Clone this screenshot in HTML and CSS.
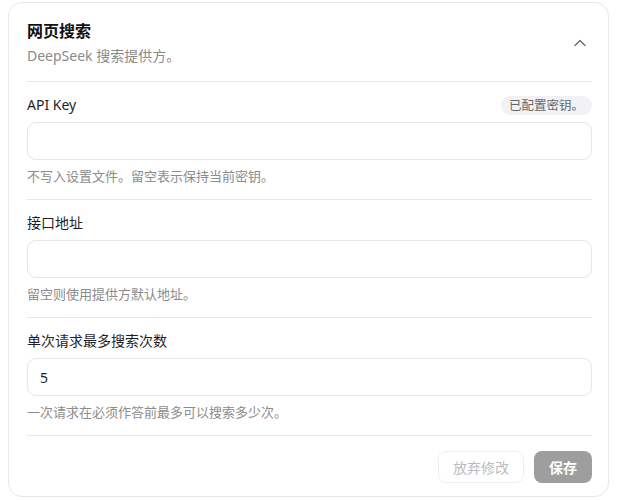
FILE: index.html
```html
<!DOCTYPE html>
<html lang="zh-CN">
<head>
  <meta charset="UTF-8">
  <title>网页搜索</title>
  <link rel="stylesheet" href="styles.css">
</head>
<body>

<div class="card">
  <div class="card-header">
    <div class="header-text">
      <div class="title">网页搜索</div>
      <div class="subtitle">DeepSeek 搜索提供方。</div>
    </div>
    <button class="collapse-btn" aria-label="收起">
      <svg width="12" height="8" viewBox="0 0 12 8">
        <path d="M1 6.5 L6 1.5 L11 6.5" fill="none" stroke="#666" stroke-width="1.3" stroke-linecap="round" stroke-linejoin="round"/>
      </svg>
    </button>
  </div>

  <div class="field">
    <div class="field-top">
      <label class="field-label">API Key</label>
      <span class="badge">已配置密钥。</span>
    </div>
    <input class="field-input" type="password">
    <div class="field-help">不写入设置文件。留空表示保持当前密钥。</div>
  </div>

  <div class="field">
    <div class="field-top">
      <label class="field-label">接口地址</label>
    </div>
    <input class="field-input" type="text">
    <div class="field-help">留空则使用提供方默认地址。</div>
  </div>

  <div class="field">
    <div class="field-top">
      <label class="field-label">单次请求最多搜索次数</label>
    </div>
    <input class="field-input" type="text" value="5">
    <div class="field-help">一次请求在必须作答前最多可以搜索多少次。</div>
  </div>

  <div class="card-footer">
    <button class="btn btn-ghost" disabled>放弃修改</button>
    <button class="btn btn-primary" disabled>保存</button>
  </div>
</div>

</body>
</html>
```

FILE: styles.css
```css
* {
  box-sizing: border-box;
}

body {
  margin: 2px 8px;
  background-color: #fff;
  font-family: "Noto Sans", "Noto Sans CJK SC", sans-serif;
  color: #1f1f1f;
}

.card {
  width: 601px;
  border: 1px solid #e6e6ef;
  border-radius: 14px;
  background-color: #fff;
  padding: 0 16px 0 18px;
}

.card-header {
  display: flex;
  align-items: center;
  justify-content: space-between;
  padding: 17px 0 15px;
  border-bottom: 1px solid #e8e8ec;
}

.header-text {
  display: flex;
  flex-direction: column;
  gap: 4px;
}

.title {
  font-size: 16px;
  font-weight: 700;
  line-height: 22px;
  color: #111;
}

.subtitle {
  font-size: 14px;
  line-height: 20px;
  color: #8a8a8a;
}

.collapse-btn {
  border: none;
  background: none;
  padding: 0 6px;
  cursor: pointer;
  display: flex;
}

.field {
  display: flex;
  flex-direction: column;
  padding: 13px 0 14px;
  border-bottom: 1px solid #e8e8ec;
}

.field-top {
  display: flex;
  align-items: center;
  justify-content: space-between;
  height: 20px;
  margin-bottom: 7px;
}

.field-label {
  font-size: 14px;
  line-height: 20px;
  color: #1f1f1f;
}

.badge {
  font-size: 12.5px;
  line-height: 19px;
  padding: 0 8px;
  border-radius: 10px;
  background-color: #f2f2f4;
  color: #666;
}

.field-input {
  height: 38px;
  width: 100%;
  border: 1px solid #e6e6e9;
  border-radius: 9px;
  padding: 0 12px;
  font-family: inherit;
  font-size: 14px;
  color: #1f1f1f;
  outline: none;
}

.field-help {
  margin-top: 7px;
  font-size: 13px;
  line-height: 18px;
  color: #8c8c8c;
}

.card-footer {
  display: flex;
  justify-content: flex-end;
  gap: 10px;
  padding: 15px 0 13px;
}

.btn {
  height: 32px;
  border-radius: 8px;
  font-family: inherit;
  font-size: 14px;
  padding: 0 14px;
  cursor: not-allowed;
}

.btn-ghost {
  border: 1px solid #efeff2;
  background-color: #fff;
  color: #bdbdbd;
}

.btn-primary {
  border: none;
  background-color: #9e9e9e;
  color: #fff;
  font-weight: 700;
  padding: 0 15px;
}
```
